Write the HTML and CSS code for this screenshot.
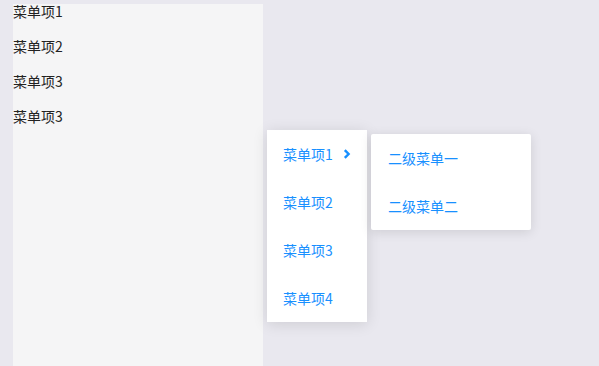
FILE: index.html
```html
<!DOCTYPE html>
<html lang="zh">
  <head>
    <meta charset="UTF-8" />
    <title>menu</title>
    <link rel="stylesheet" href="styles.css">
  </head>
  <body>
    <div class="side">
      <div class="side-item">菜单项1</div>
      <div class="side-item">菜单项2</div>
      <div class="side-item">菜单项3</div>
      <div class="side-item">菜单项3</div>
    </div>

    <div class="menu">
      <div class="menu-item">
        <span>菜单项1</span>
        <svg class="arrow" width="8" height="10" viewBox="0 0 8 10">
          <path d="M1.8 1.2 L5.6 5 L1.8 8.8" fill="none" stroke="#1890ff" stroke-width="2.4" />
        </svg>
      </div>
      <div class="menu-item">菜单项2</div>
      <div class="menu-item">菜单项3</div>
      <div class="menu-item">菜单项4</div>

      <div class="submenu">
        <div class="menu-item">二级菜单一</div>
        <div class="menu-item">二级菜单二</div>
      </div>
    </div>
  </body>
</html>
```

FILE: styles.css
```css
body {
  margin: 0;
  height: 366px;
  overflow: hidden;
  background: #e9e8ef;
  font-family: "Noto Sans CJK SC", "Noto Sans", sans-serif;
  font-size: 14px;
}
.side {
  margin: 4px 0 0 13px;
  width: 250px;
  height: 362px;
  background: #f5f5f6;
}
.side-item {
  color: #222;
  line-height: 14px;
  margin-bottom: 21px;
}
.menu {
  position: absolute;
  left: 267px;
  top: 130px;
  width: 100px;
  background: #fff;
  box-shadow: 0 2px 14px rgba(0, 0, 0, 0.12);
}
.menu-item {
  display: flex;
  align-items: center;
  height: 48px;
  padding: 0 16px;
  color: #1890ff;
  white-space: nowrap;
}
.arrow {
  margin-left: 10px;
}
.submenu {
  position: absolute;
  left: 104px;
  top: 4px;
  width: 160px;
  background: #fff;
  border-radius: 2px;
  box-shadow: 0 2px 12px rgba(0, 0, 0, 0.12);
}
.submenu .menu-item {
  padding-left: 17px;
}
```
